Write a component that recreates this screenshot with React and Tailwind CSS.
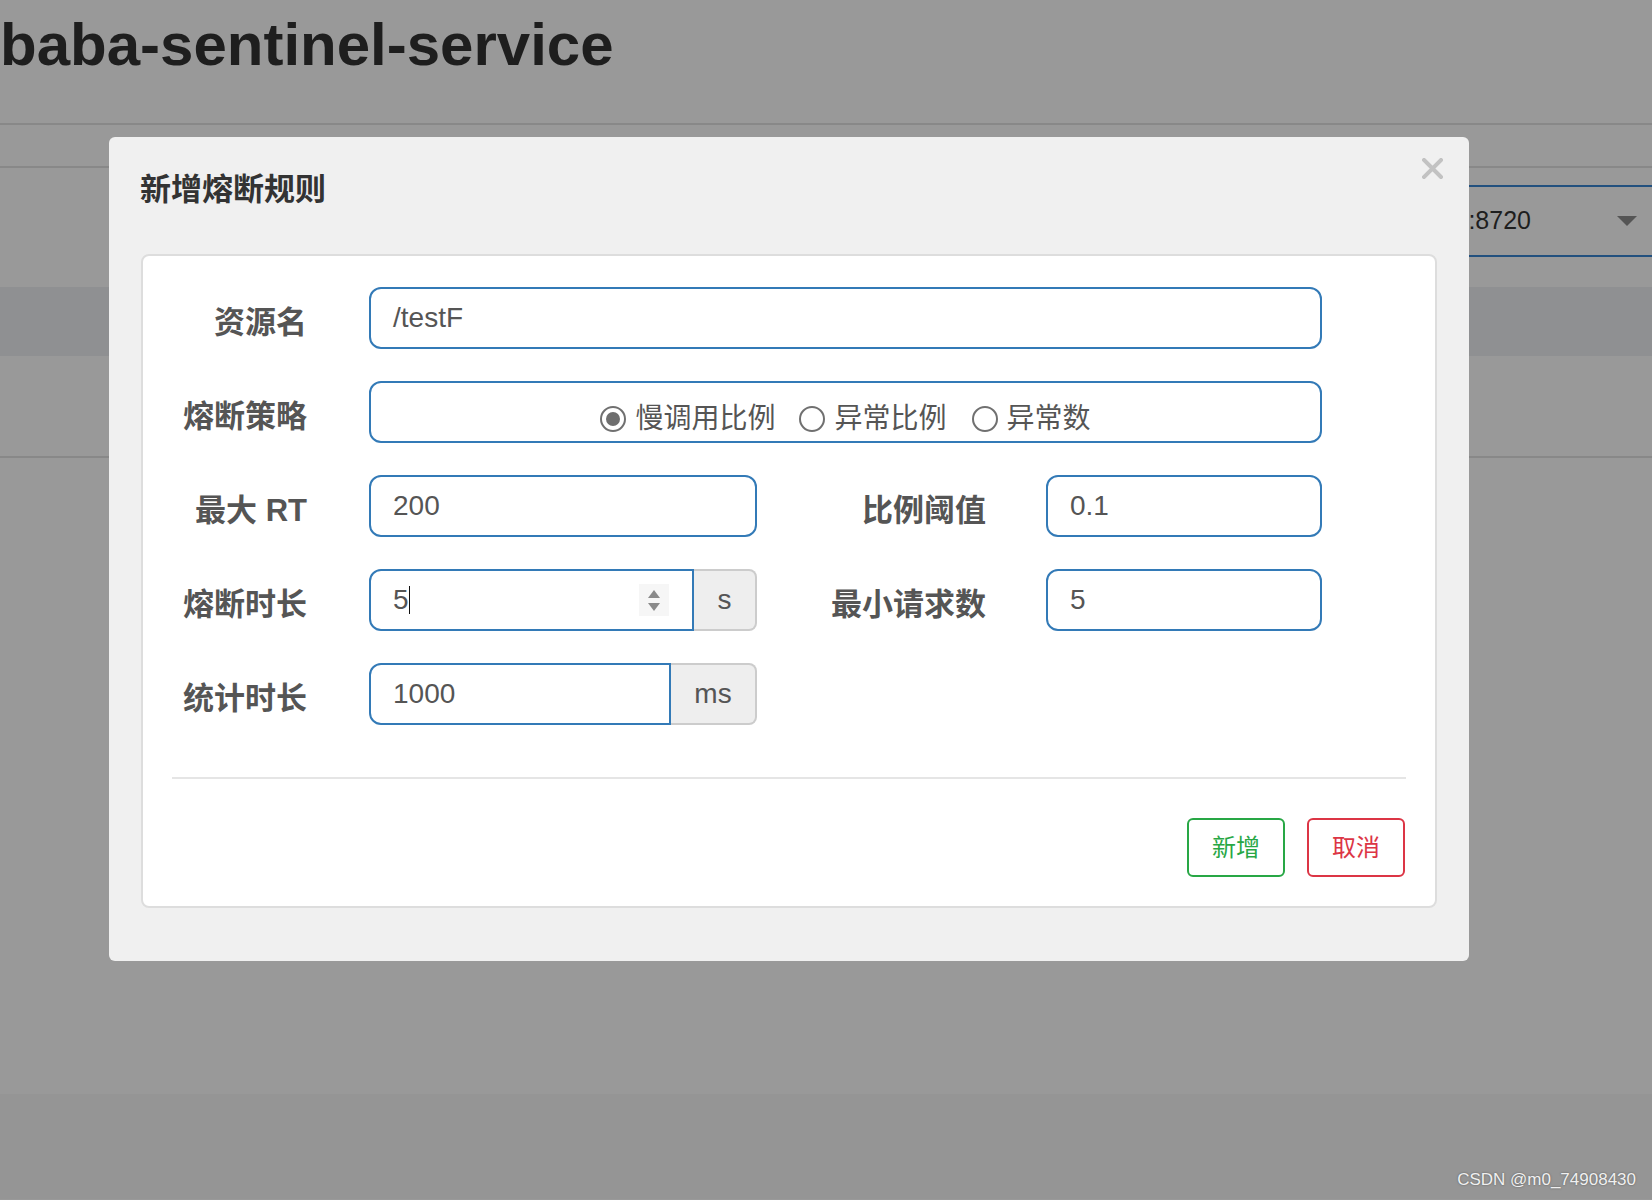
import React from 'react';

// 熔断规则弹窗
function Radio({ checked, label, className }) {
  return (
    <label className={`flex items-center ${className || ''}`}>
      <span className="w-[26px] h-[26px] rounded-full border-2 border-[#707070] bg-white flex items-center justify-center">
        {checked && <span className="w-[14px] h-[14px] rounded-full bg-[#6e6e6e]" />}
      </span>
      <span className="ml-[9px] text-[28px] leading-[30px] text-[#555]">{label}</span>
    </label>
  );
}

function Label({ children, width }) {
  return (
    <div className={`${width} shrink-0 text-right font-bold text-[31px] leading-[31px] text-[#555] pt-[8px]`}>
      {children}
    </div>
  );
}

export default function App() {
  return (
    <div className="relative w-[1652px] h-[1200px] overflow-hidden bg-[#999] font-['Liberation_Sans','Noto_Sans_CJK_SC',sans-serif]">
      {/* page behind the backdrop */}
      <div className="h-[123px] pt-[15px]">
        <h1 className="text-[60px] leading-[60px] font-bold text-[#1e1e1e] whitespace-nowrap">
          baba-sentinel-service
        </h1>
      </div>
      <div className="h-[2px] bg-[#888]" />
      <div className="h-[41px]" />
      <div className="h-[2px] bg-[#888]" />
      <div className="h-[119px] pt-[17px] flex justify-end">
        <div className="w-[700px] h-[72px] border-y-2 border-[#22507e] flex items-center justify-end">
          <span className="mr-[86px] text-[25px] text-[#1e1e1e]">192.168.56.1:8720</span>
          <span className="mr-[15px] w-0 h-0 border-l-[10px] border-r-[10px] border-t-[10px] border-l-transparent border-r-transparent border-t-[#555]" />
        </div>
      </div>
      <div className="h-[69px] bg-[#8f9092]" />
      <div className="h-[100px]" />
      <div className="h-[2px] bg-[#888]" />
      <div className="h-[636px]" />
      <div className="h-[105px] bg-[#959595]" />

      {/* modal */}
      <div className="absolute left-[109px] top-[137px] w-[1360px] bg-[#f0f0f0] rounded-[6px] pt-[38px] pb-[53px]">
        <button className="absolute right-[26px] top-[21px] w-[21px] h-[21px]">
          <svg viewBox="0 0 21 21" className="w-[21px] h-[21px]">
            <path d="M2 2 L19 19 M19 2 L2 19" stroke="#c2c2c2" strokeWidth="4" strokeLinecap="square" />
          </svg>
        </button>
        <h4 className="pl-[31px] text-[31px] leading-[30px] font-bold text-[#333]">新增熔断规则</h4>

        <div className="mt-[49px] mx-[32px] bg-white border-2 border-[#ddd] rounded-[8px] pt-[31px] pb-[29px]">
          <div className="flex flex-col gap-[32px]">
            {/* 资源名 */}
            <div className="flex items-center">
              <Label width="w-[164px]">资源名</Label>
              <div className="ml-[62px] w-[953px] h-[62px] border-2 border-[#337ab7] rounded-[12px] pl-[22px] flex items-center text-[28px] text-[#555]">
                /testF
              </div>
            </div>

            {/* 熔断策略 */}
            <div className="flex items-center">
              <Label width="w-[164px]">熔断策略</Label>
              <div className="ml-[62px] w-[953px] h-[62px] border-2 border-[#337ab7] rounded-[12px] flex items-center justify-center pt-[13px]">
                <Radio checked label="慢调用比例" />
                <Radio label="异常比例" className="ml-[24px]" />
                <Radio label="异常数" className="ml-[25px]" />
              </div>
            </div>

            {/* 最大 RT / 比例阈值 */}
            <div className="flex items-center">
              <Label width="w-[164px]">最大 RT</Label>
              <div className="ml-[62px] w-[388px] h-[62px] border-2 border-[#337ab7] rounded-[12px] pl-[22px] flex items-center text-[28px] text-[#555]">
                200
              </div>
              <Label width="w-[229px]">比例阈值</Label>
              <div className="ml-[60px] w-[276px] h-[62px] border-2 border-[#337ab7] rounded-[12px] pl-[22px] flex items-center text-[28px] text-[#555]">
                0.1
              </div>
            </div>

            {/* 熔断时长 / 最小请求数 */}
            <div className="flex items-center">
              <Label width="w-[164px]">熔断时长</Label>
              <div className="ml-[62px] w-[388px] h-[62px] flex">
                <div className="w-[325px] h-full border-2 border-[#337ab7] rounded-l-[12px] pl-[22px] pr-[23px] flex items-center text-[28px] text-[#555]">
                  <span>5</span>
                  <span className="w-[1px] h-[28px] bg-[#111]" />
                  <span className="ml-auto w-[30px] h-[32px] bg-[#f6f6f6] flex flex-col items-center justify-center gap-[5px]">
                    <span className="w-0 h-0 border-l-[6px] border-r-[6px] border-b-[8px] border-l-transparent border-r-transparent border-b-[#8a8a8a]" />
                    <span className="w-0 h-0 border-l-[6px] border-r-[6px] border-t-[8px] border-l-transparent border-r-transparent border-t-[#8a8a8a]" />
                  </span>
                </div>
                <div className="flex-1 h-full bg-[#eee] border-2 border-l-0 border-[#ccc] rounded-r-[8px] flex items-center justify-center text-[28px] text-[#555]">
                  s
                </div>
              </div>
              <Label width="w-[229px]">最小请求数</Label>
              <div className="ml-[60px] w-[276px] h-[62px] border-2 border-[#337ab7] rounded-[12px] pl-[22px] flex items-center text-[28px] text-[#555]">
                5
              </div>
            </div>

            {/* 统计时长 */}
            <div className="flex items-center">
              <Label width="w-[164px]">统计时长</Label>
              <div className="ml-[62px] w-[388px] h-[62px] flex">
                <div className="w-[302px] h-full border-2 border-[#337ab7] rounded-l-[12px] pl-[22px] flex items-center text-[28px] text-[#555]">
                  1000
                </div>
                <div className="flex-1 h-full bg-[#eee] border-2 border-l-0 border-[#ccc] rounded-r-[8px] flex items-center justify-center text-[28px] text-[#555]">
                  ms
                </div>
              </div>
            </div>
          </div>

          <div className="mt-[52px] mx-[29px] h-[2px] bg-[#e5e5e5]" />

          <div className="mt-[39px] mr-[30px] flex justify-end gap-[22px]">
            <button className="w-[98px] h-[59px] border-2 border-[#28a745] rounded-[6px] text-[24px] text-[#28a745] bg-white">
              新增
            </button>
            <button className="w-[98px] h-[59px] border-2 border-[#dc3545] rounded-[6px] text-[24px] text-[#dc3545] bg-white">
              取消
            </button>
          </div>
        </div>
      </div>

      <div className="absolute right-[16px] bottom-[8px] text-[17px] text-[#f0f0f0] [text-shadow:0_0_2px_#555]">
        CSDN @m0_74908430
      </div>
    </div>
  );
}
